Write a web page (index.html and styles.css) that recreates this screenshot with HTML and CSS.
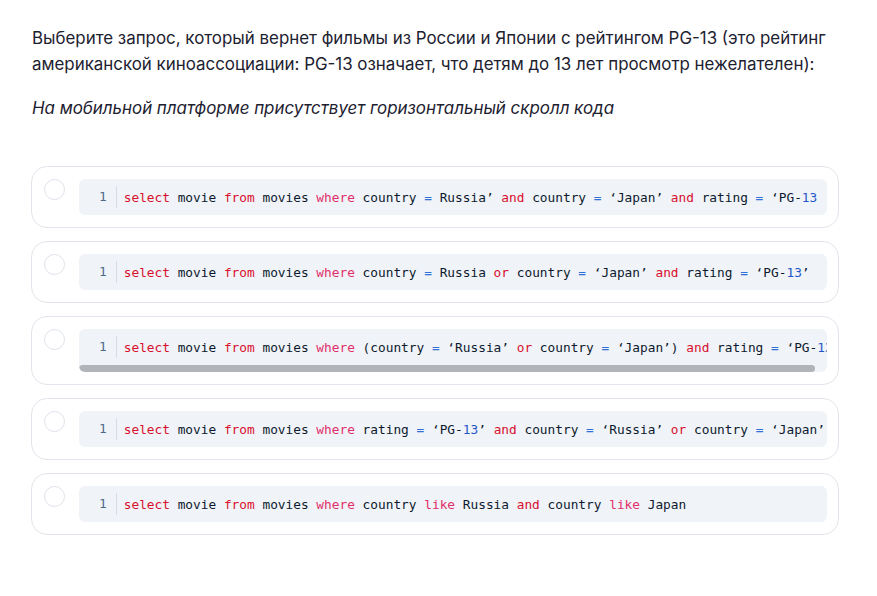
FILE: index.html
```html
<!DOCTYPE html>
<html lang="ru">
<head>
<meta charset="utf-8">
<link rel="stylesheet" href="styles.css">
</head>
<body>
<main class="page">
  <p class="question">Выберите запрос, который вернет фильмы из России и Японии с рейтингом PG-13 (это рейтинг американской киноассоциации: PG-13 означает, что детям до 13 лет просмотр нежелателен):</p>
  <p class="note">На мобильной платформе присутствует горизонтальный скролл кода</p>

  <div class="options">
    <label class="option">
      <span class="radio"></span>
      <div class="code">
        <div class="line"><span class="ln">1</span><code><span class="kw">select</span> movie <span class="kw">from</span> movies <span class="kw2">where</span> country <span class="op">=</span> Russia’ <span class="kw">and</span> country <span class="op">=</span> ‘Japan’ <span class="kw">and</span> rating <span class="op">=</span> ‘PG-<span class="num">13</span></code></div>
      </div>
    </label>

    <label class="option">
      <span class="radio"></span>
      <div class="code">
        <div class="line"><span class="ln">1</span><code><span class="kw">select</span> movie <span class="kw">from</span> movies <span class="kw2">where</span> country <span class="op">=</span> Russia <span class="kw">or</span> country <span class="op">=</span> ‘Japan’ <span class="kw">and</span> rating <span class="op">=</span> ‘PG-<span class="num">13</span>’</code></div>
      </div>
    </label>

    <label class="option">
      <span class="radio"></span>
      <div class="code">
        <div class="line"><span class="ln">1</span><code><span class="kw">select</span> movie <span class="kw">from</span> movies <span class="kw2">where</span> (country <span class="op">=</span> ‘Russia’ <span class="kw">or</span> country <span class="op">=</span> ‘Japan’) <span class="kw">and</span> rating <span class="op">=</span> ‘PG-<span class="num">13</span>’</code></div>
        <div class="scrollbar"><span class="thumb"></span></div>
      </div>
    </label>

    <label class="option">
      <span class="radio"></span>
      <div class="code">
        <div class="line"><span class="ln">1</span><code><span class="kw">select</span> movie <span class="kw">from</span> movies <span class="kw2">where</span> rating <span class="op">=</span> ‘PG-<span class="num">13</span>’ <span class="kw">and</span> country <span class="op">=</span> ‘Russia’ <span class="kw">or</span> country <span class="op">=</span> ‘Japan’</code></div>
      </div>
    </label>

    <label class="option">
      <span class="radio"></span>
      <div class="code">
        <div class="line"><span class="ln">1</span><code><span class="kw">select</span> movie <span class="kw">from</span> movies <span class="kw2">where</span> country <span class="kw2">like</span> Russia <span class="kw">and</span> country <span class="kw2">like</span> Japan</code></div>
      </div>
    </label>
  </div>
</main>
</body>
</html>
```

FILE: styles.css
```css
html, body {
  margin: 0;
  padding: 0;
  background: #ffffff;
}

.page {
  padding: 25px 38px 40px 31px;
  font-family: Inter, "Noto Sans", sans-serif;
  color: #1d2130;
}

.question {
  margin: 0 0 18px 1px;
  font-size: 16.9px;
  line-height: 26px;
}

.note {
  margin: 0 0 45px 1px;
  font-size: 16.9px;
  line-height: 26px;
  font-style: italic;
}

.options {
  display: flex;
  flex-direction: column;
  gap: 13px;
}

.option {
  display: flex;
  align-items: flex-start;
  gap: 14px;
  padding: 12px 11px 12px 12px;
  border: 1px solid #e2e5eb;
  border-radius: 16px;
  background: #fff;
}

.radio {
  flex: none;
  width: 19px;
  height: 19px;
  border: 1px solid #dde2ea;
  border-radius: 50%;
  box-sizing: content-box;
}

.code {
  flex: 1;
  min-width: 0;
  background: #f0f3f8;
  border-radius: 6px;
  overflow: hidden;
}

.line {
  display: flex;
  align-items: center;
  height: 36px;
  padding-left: 20px;
  font-family: "DejaVu Sans Mono", "Liberation Mono", monospace;
  font-size: 12.8px;
  white-space: nowrap;
  overflow: hidden;
  color: #0d1a2e;
}

.ln {
  flex: none;
  color: #4d6a88;
  padding-right: 9px;
  border-right: 1px solid #d8dde5;
  line-height: 22px;
  margin-right: 7px;
}

code {
  font-family: inherit;
  font-size: inherit;
}

.kw { color: #d8102e; }
.kw2 { color: #e0306a; }
.op { color: #2f6fd6; }
.num { color: #1f55c9; }

.scrollbar {
  height: 7px;
}

.thumb {
  display: block;
  width: 736px;
  height: 7px;
  background: #b1b4b9;
  border-radius: 4px;
}
```
